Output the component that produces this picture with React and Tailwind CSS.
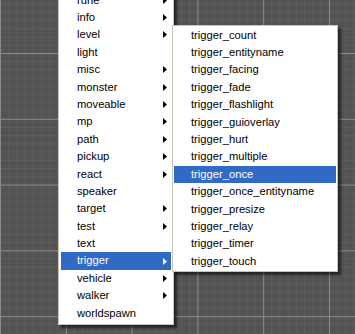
import React from 'react';

const mainItems = [
  { label: 'rune', sub: true },
  { label: 'info', sub: true },
  { label: 'level', sub: true },
  { label: 'light' },
  { label: 'misc', sub: true },
  { label: 'monster', sub: true },
  { label: 'moveable', sub: true },
  { label: 'mp', sub: true },
  { label: 'path', sub: true },
  { label: 'pickup', sub: true },
  { label: 'react', sub: true },
  { label: 'speaker' },
  { label: 'target', sub: true },
  { label: 'test', sub: true },
  { label: 'text' },
  { label: 'trigger', sub: true, active: true },
  { label: 'vehicle', sub: true },
  { label: 'walker', sub: true },
  { label: 'worldspawn' },
];

const triggerItems = [
  'trigger_count',
  'trigger_entityname',
  'trigger_facing',
  'trigger_fade',
  'trigger_flashlight',
  'trigger_guioverlay',
  'trigger_hurt',
  'trigger_multiple',
  'trigger_once',
  'trigger_once_entityname',
  'trigger_presize',
  'trigger_relay',
  'trigger_timer',
  'trigger_touch',
];

function Arrow({ white }) {
  return (
    <svg width="4" height="7" viewBox="0 0 4 7" className="shrink-0">
      <path d="M0 0L4 3.5L0 7Z" fill={white ? '#ffffff' : '#000000'} />
    </svg>
  );
}

function MenuItem({ label, sub, active, padLeft }) {
  return (
    <div
      className={`flex h-[17.4px] items-center justify-between pr-[4px] ${padLeft} ${
        active ? 'bg-[#316ac5] text-white' : 'text-black'
      }`}
    >
      <span className="leading-none">{label}</span>
      {sub && <Arrow white={active} />}
    </div>
  );
}

export default function App() {
  return (
    <div
      className="relative h-[334px] w-[355px] overflow-hidden bg-[#535353] text-[11.2px] [font-family:'Liberation_Sans',Arial,sans-serif] [background-image:linear-gradient(to_right,#8a8a8a_1px,transparent_1px),linear-gradient(to_bottom,#8a8a8a_1px,transparent_1px),linear-gradient(to_right,#5d5d5d_1px,transparent_1px),linear-gradient(to_bottom,#5d5d5d_1px,transparent_1px)] [background-size:65.8px_65.8px,65.8px_65.8px,8.225px_8.225px,8.225px_8.225px] [background-position:0_53px]"
    >
      <div className="absolute left-[58px] top-[-11.5px] w-[116px] border border-[#c9c5b6] bg-white p-[2px] shadow-[3px_3px_2px_rgba(0,0,0,0.55)]">
        {mainItems.map((item) => (
          <MenuItem key={item.label} {...item} padLeft="pl-[16px]" />
        ))}
      </div>

      <div className="absolute left-[172px] top-[24.5px] w-[166px] border border-[#c9c5b6] bg-white p-[1px] shadow-[3px_3px_2px_rgba(0,0,0,0.55)]">
        {triggerItems.map((label) => (
          <MenuItem
            key={label}
            label={label}
            active={label === 'trigger_once'}
            padLeft="pl-[17px]"
          />
        ))}
      </div>
    </div>
  );
}
